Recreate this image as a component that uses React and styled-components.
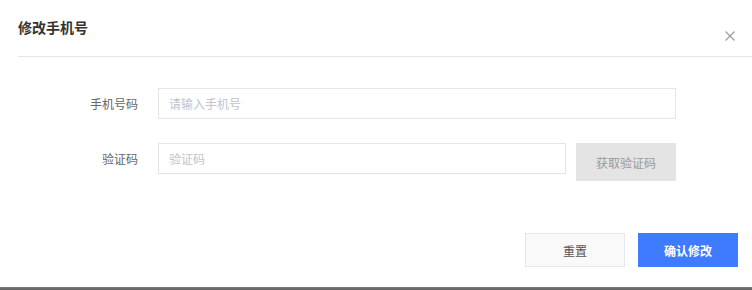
import React from 'react'
import styled, { createGlobalStyle } from 'styled-components'

const GlobalStyle = createGlobalStyle`
  html, body {
    margin: 0;
    padding: 0;
    background: #fff;
  }
  body {
    font-family: "Noto Sans CJK SC", "Noto Sans", sans-serif;
  }
  * {
    box-sizing: border-box;
  }
`

const Dialog = styled.div`
  width: 752px;
  display: flex;
  flex-direction: column;
  background: #fff;
`

const Header = styled.div`
  display: flex;
  justify-content: space-between;
  align-items: flex-start;
  height: 57px;
  margin-left: 18px;
  border-bottom: 1px solid #e6e6e6;
`

const Title = styled.div`
  margin-top: 18px;
  font-size: 14px;
  line-height: 18px;
  font-weight: 600;
  color: #333;
`

const Close = styled.button`
  margin: 31px 17px 0 0;
  width: 10px;
  height: 10px;
  padding: 0;
  border: none;
  background: none;
  display: flex;
  cursor: pointer;
`

const Form = styled.div`
  display: grid;
  grid-template-columns: 120px 518px;
  column-gap: 20px;
  row-gap: 24px;
  margin: 31px 0 0 18px;
`

const Label = styled.label`
  text-align: right;
  font-size: 12px;
  line-height: 31px;
  color: #666;
`

const Field = styled.div`
  display: flex;
  align-items: flex-start;
  gap: 10px;
`

const Input = styled.input`
  width: ${p => p.$width}px;
  height: 31px;
  padding: 0 10px;
  border: 1px solid #e3e5ee;
  border-radius: 0;
  outline: none;
  font-family: inherit;
  font-size: 12px;
  color: #333;

  &::placeholder {
    color: #c0c4cc;
  }
`

const CodeButton = styled.button`
  width: 100px;
  height: 38px;
  border: none;
  background: #e4e4e4;
  color: #999;
  font-family: inherit;
  font-size: 12px;
  cursor: not-allowed;
`

const Footer = styled.div`
  display: flex;
  justify-content: flex-end;
  gap: 13px;
  margin-top: 52px;
  padding: 0 14px 20px 0;
`

const Button = styled.button`
  width: 100px;
  height: 34px;
  font-family: inherit;
  font-size: 12px;
  cursor: pointer;
  border: 1px solid ${p => (p.$primary ? '#3e7bff' : '#e6e7ee')};
  background: ${p => (p.$primary ? '#3e7bff' : '#f9f9f9')};
  color: ${p => (p.$primary ? '#fff' : '#555')};
  font-weight: ${p => (p.$primary ? 600 : 400)};
`

const BottomBar = styled.div`
  height: 3px;
  background: linear-gradient(#7c7c7c, #5f5f5f);
`

const CloseIcon = () => (
  <svg width="10" height="10" viewBox="0 0 10 10">
    <path d="M0.5 0.5L9.5 9.5M9.5 0.5L0.5 9.5" stroke="#9a9a9a" strokeWidth="1.1" fill="none" />
  </svg>
)

const App = () => (
  <>
    <GlobalStyle />
    <Dialog>
      <Header>
        <Title>修改手机号</Title>
        <Close aria-label="关闭">
          <CloseIcon />
        </Close>
      </Header>
      <Form>
        <Label>手机号码</Label>
        <Field>
          <Input $width={518} placeholder="请输入手机号" />
        </Field>
        <Label>验证码</Label>
        <Field>
          <Input $width={408} placeholder="验证码" />
          <CodeButton>获取验证码</CodeButton>
        </Field>
      </Form>
      <Footer>
        <Button>重置</Button>
        <Button $primary>确认修改</Button>
      </Footer>
      <BottomBar />
    </Dialog>
  </>
)

export default App
